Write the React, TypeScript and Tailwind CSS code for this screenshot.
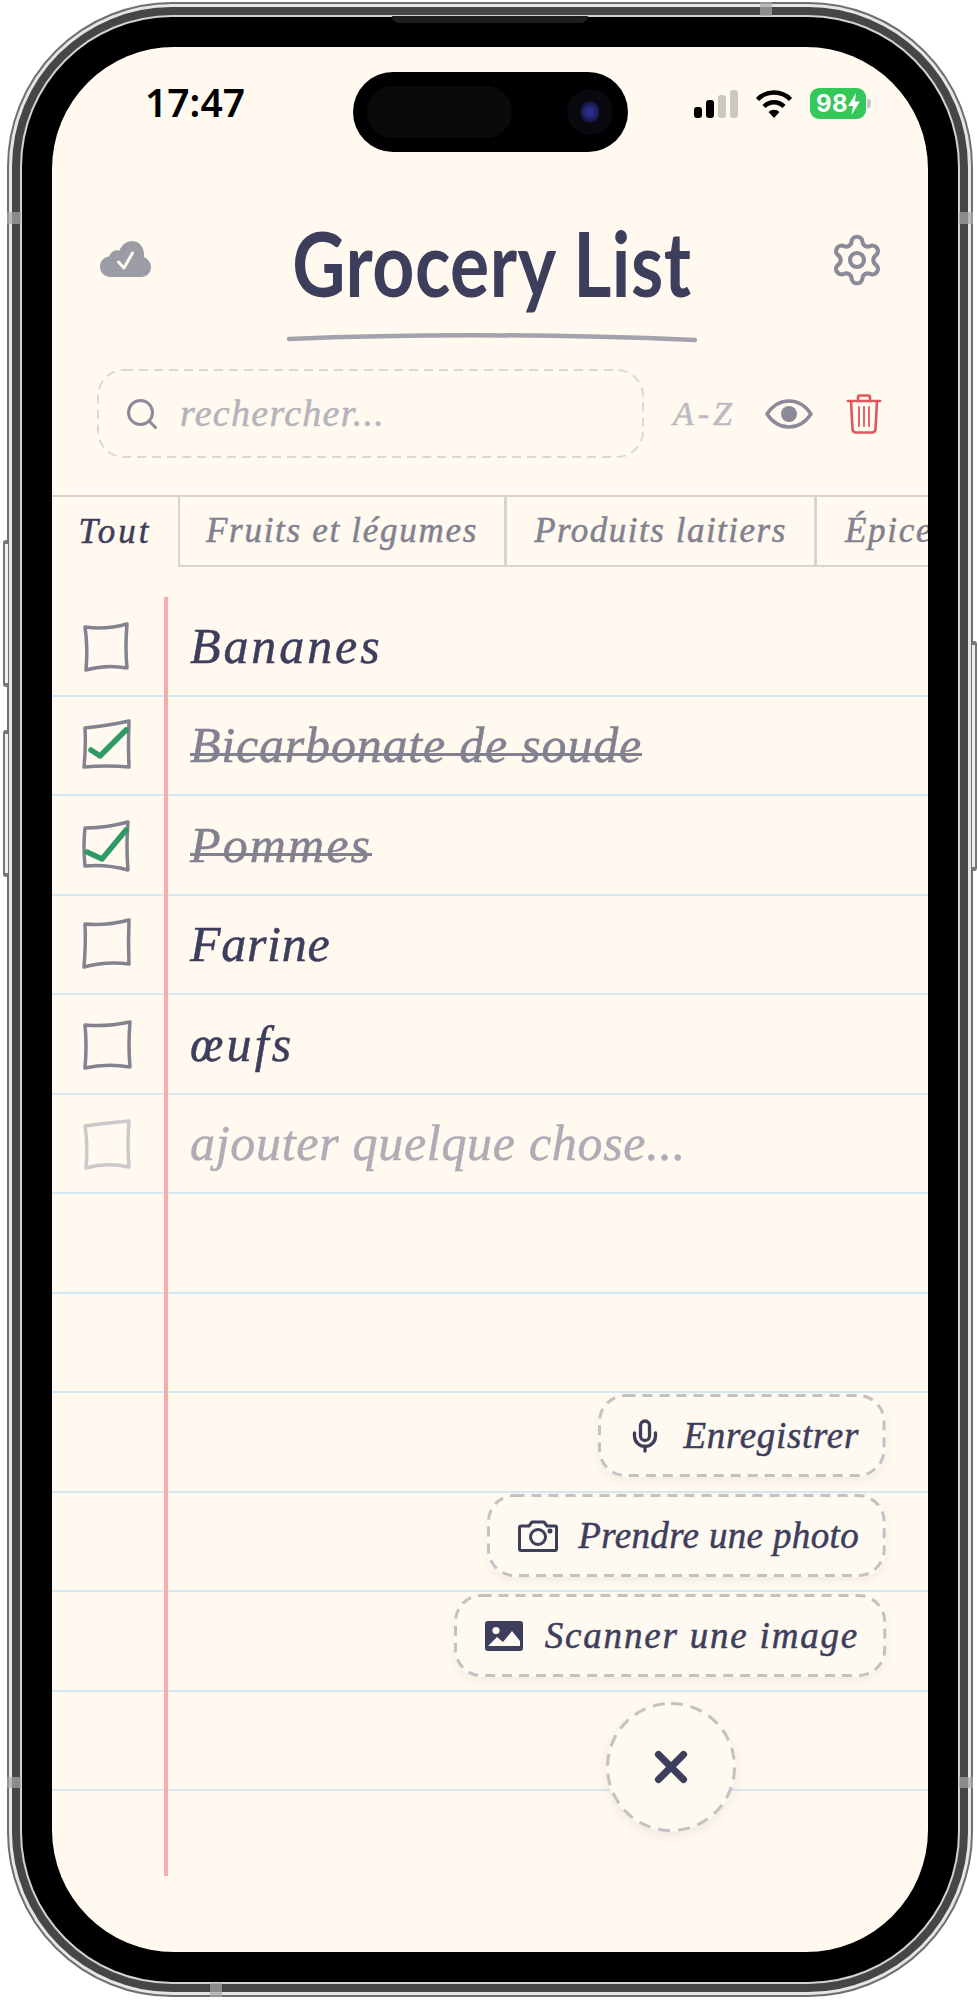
import { Mic, Search, Settings, X } from 'lucide-react';

const hand = 'font-["Liberation_Serif",serif] italic [-webkit-text-stroke:0.5px_currentColor]';

const items = [
  { label: 'Bananes', state: 'todo', track: 'tracking-[2.9px]', box: 'M3 7 Q24 10 45 4 Q43 27 45 48 Q24 44 4 50 Q6 27 3 7Z' },
  { label: 'Bicarbonate de soude', state: 'done', track: 'tracking-[0.8px]', box: 'M3 9 Q24 7 47 2 Q46 26 47 48 Q24 46 2 48 Q4 28 3 9Z', check: 'M9 31 L18 37 L44 11' },
  { label: 'Pommes', state: 'done', track: 'tracking-[2.1px]', box: 'M3 9 Q24 9 46 3 Q44 26 46 51 Q24 45 3 47 Q1 27 3 9Z', check: 'M5 33 L20 40 L44 11' },
  { label: 'Farine', state: 'todo', track: 'tracking-[0.7px]', box: 'M3 6 Q24 8 47 2 Q46 25 47 46 Q24 43 2 49 Q4 25 3 6Z' },
  { label: 'œufs', state: 'todo', track: 'tracking-[3.2px]', box: 'M3 7 Q24 9 48 4 Q46 27 48 49 Q24 45 3 50 Q5 27 3 7Z' },
  { label: 'ajouter quelque chose...', state: 'new', track: 'tracking-[0.7px]', box: 'M3 9 Q24 6 47 4 Q45 27 47 50 Q24 45 4 51 Q6 27 3 9Z' },
];

function Checkbox({ box, check, muted }: { box: string; check?: string; muted: boolean }) {
  return (
    <svg width="52" height="52" viewBox="0 0 52 52" fill="none" className="block overflow-visible">
      <path d={box} stroke={muted ? '#cbc9ca' : '#83838f'} strokeWidth="3.5" strokeLinejoin="round" />
      {check && <path d={check} stroke="#2f9a66" strokeWidth="5.5" strokeLinecap="round" strokeLinejoin="round" />}
    </svg>
  );
}

/** Bordure en tirets dessinée par-dessus : le motif du border-dashed CSS est trop court */
function DashedOutline({ radius, dash, color, width }: { radius: number; dash: string; color: string; width: number }) {
  return (
    <svg className="pointer-events-none absolute inset-0 h-full w-full overflow-visible" fill="none">
      <rect
        x={width / 2}
        y={width / 2}
        rx={radius}
        className={width === 2 ? 'h-[calc(100%-2px)] w-[calc(100%-2px)]' : 'h-[calc(100%-3px)] w-[calc(100%-3px)]'}
        stroke={color}
        strokeWidth={width}
        strokeDasharray={dash}
      />
    </svg>
  );
}

function StatusBar() {
  return (
    <div className="flex h-[105px] items-start pl-[93px] pt-[25px]">
      <span className='mt-[4px] w-[208px] font-["Noto_Sans",sans-serif] text-[39px] font-semibold leading-[52px] text-black'>
        17:47
      </span>
      <div className="flex h-[80px] w-[275px] items-center justify-between rounded-full bg-black pl-[14px] pr-[15px]">
        <div className="h-[52px] w-[145px] rounded-full bg-[#0a0a0a]" />
        <div className="flex h-[46px] w-[46px] items-center justify-center rounded-full bg-[#0b0810]">
          <div className="h-[22px] w-[18px] rounded-full bg-[radial-gradient(circle,#2a2f8a_20%,#12143f_75%)]" />
        </div>
      </div>
      <div className="ml-[66px] mt-[18px] flex h-[28px] items-end gap-[4px]">
        <div className="h-[11px] w-[8px] rounded-[3px] bg-black" />
        <div className="h-[18px] w-[8px] rounded-[3px] bg-black" />
        <div className="h-[23px] w-[8px] rounded-[3px] bg-[#cbc8bf]" />
        <div className="h-[28px] w-[8px] rounded-[3px] bg-[#cbc8bf]" />
      </div>
      <svg width="38" height="28" viewBox="0 0 38 28" fill="none" className="ml-[17px] mt-[18px]">
        <path d="M2.5 9.5A23 23 0 0 1 35.5 9.5" stroke="#000" strokeWidth="4.4" />
        <path d="M9 16.5A14 14 0 0 1 29 16.5" stroke="#000" strokeWidth="4.4" />
        <path d="M13.5 22A8 8 0 0 1 24.5 22L19 28Z" fill="#000" />
      </svg>
      <div className="ml-[17px] mt-[16px] flex items-center">
        <div className="flex h-[31px] w-[56px] items-center justify-center rounded-[9px] bg-[#34c759]">
          <span className='font-["Inter",sans-serif] text-[24px] font-bold leading-none tracking-[0.5px] text-white'>98</span>
          <svg width="12" height="22" viewBox="0 0 12 22">
            <path d="M8 0L0 13H5L3.5 22L12 8.5H7Z" fill="#fff" />
          </svg>
        </div>
        <div className="ml-[1px] h-[9px] w-[4px] rounded-r-[3px] bg-[#c9c7bf]" />
      </div>
    </div>
  );
}

function Header() {
  return (
    <div className="flex h-[195px] items-start justify-between px-[47px]">
      <svg width="51" height="36" viewBox="0 0 51 36" className="mt-[89px] ml-[1px]">
        <path
          d="M11 36C4.5 36 0 31.5 0 25.5 0 20 4 16 9 15.5 11 10.5 15 8.5 19.5 9.5 22 3.5 27 0 32 0 39 0 43.5 5.5 44 12.5 44 14 44 15 43.8 16 48 18 51 21.5 51 26 51 32 46.5 36 41 36Z"
          fill="#9c9ca6"
        />
        <path d="M18.5 21L24 27L32.5 12" stroke="#fff9f0" strokeWidth="3" fill="none" strokeLinecap="round" strokeLinejoin="round" />
      </svg>
      <div className="flex flex-col items-center pl-[4px]">
        <h1 className='mt-[57px] origin-center scale-x-[0.815] whitespace-nowrap font-["Lato",sans-serif] text-[90px] font-bold leading-[106px] tracking-[0.6px] text-[#3d3d5c]'>
          Grocery List
        </h1>
        <svg width="412" height="12" viewBox="0 0 412 12" fill="none" className="mt-[16px]">
          <path d="M3 8Q190 0 409 9" stroke="#a3a2ad" strokeWidth="4.5" strokeLinecap="round" />
        </svg>
      </div>
      <Settings size={56} strokeWidth={1.75} className="mt-[80px] -mr-[4px] text-[#8a8a99]" />
    </div>
  );
}

function SearchRow() {
  return (
    <div className="mt-[22px] flex h-[89px] items-center pl-[45px]">
      <div className="relative flex h-[89px] w-[547px] items-center gap-[20px] pl-[27px]">
        <DashedOutline radius={26} dash="9 6" color="#dbd8d2" width={2} />
        <Search size={36} strokeWidth={2} className="text-[#8a8a99]" />
        <span className={`${hand} text-[38px] tracking-[1.3px] text-[#b5b3ba]`}>rechercher...</span>
      </div>
      <span className={`${hand} ml-[29px] w-[60px] whitespace-nowrap text-[34px] tracking-[4px] text-[#bcbac0]`}>A-Z</span>
      <svg width="48" height="30" viewBox="0 0 48 30" fill="none" className="ml-[32px]">
        <path d="M2 15C8 6 15 2 24 2S40 6 46 15C40 24 33 28 24 28S8 24 2 15Z" stroke="#8a8a99" strokeWidth="3.5" strokeLinejoin="round" />
        <circle cx="24" cy="15" r="8" fill="#8a8a99" />
      </svg>
      <svg width="36" height="40" viewBox="0 0 36 40" fill="none" stroke="#e0565c" strokeWidth="2.6" strokeLinecap="round" strokeLinejoin="round" className="ml-[33px]">
        <path d="M2 7H34" />
        <path d="M12 7V3.5C12 2 13 1.5 14 1.5H22C23 1.5 24 2 24 3.5V7" />
        <path d="M5 7L6.5 35C6.6 37.5 8 38.5 10 38.5H26C28 38.5 29.4 37.5 29.5 35L31 7" />
        <path d="M13 13V32M18 13V32M23 13V32" strokeWidth="1.8" />
      </svg>
    </div>
  );
}

function Tabs() {
  return (
    <div className="mt-[37px] flex h-[72px] overflow-hidden border-t-2 border-[#d8d5d0]">
      <div className={`${hand} flex w-[128px] shrink-0 items-center justify-center border-r-2 border-[#d8d5d0] text-[35px] tracking-[3px] text-[#3d3d5c]`}>
        Tout
      </div>
      <div className={`${hand} flex w-[327px] shrink-0 items-center justify-center border-r-[3px] border-b-2 border-[#d8d5d0] text-[35px] tracking-[1.7px] text-[#82818f]`}>
        Fruits et légumes
      </div>
      <div className={`${hand} flex w-[310px] shrink-0 items-center justify-center border-r-[3px] border-b-2 border-[#d8d5d0] text-[35px] tracking-[1.5px] text-[#82818f]`}>
        Produits laitiers
      </div>
      <div className={`${hand} flex flex-1 items-center whitespace-nowrap border-b-2 border-[#d8d5d0] pl-[28px] text-[35px] tracking-[1.7px] text-[#82818f]`}>
        Épicerie
      </div>
    </div>
  );
}

function GroceryList() {
  return (
    <div className="relative mt-[30px] h-[1279px]">
      <div className="absolute left-[112px] top-0 bottom-0 z-10 w-[4px] bg-[#f4aeab]" />
      {items.map((item) => {
        const done = item.state === 'done';
        return (
          <div key={item.label} className="flex h-[99.5px] items-center border-b-2 border-[#d4e8f3]">
            <div className="ml-[30px] w-[108px] shrink-0">
              <Checkbox box={item.box} check={item.check} muted={item.state === 'new'} />
            </div>
            <span
              className={`${hand} text-[50px] leading-none ${item.track} ${
                done
                  ? 'text-[#82818f] underline decoration-[3px] underline-offset-[-9px] [text-decoration-skip-ink:none]'
                  : item.state === 'new'
                    ? 'text-[#aeacb4]'
                    : 'text-[#3d3d5c]'
              }`}
            >
              {item.label}
            </span>
          </div>
        );
      })}
      {Array.from({ length: 6 }, (_, i) => (
        <div key={i} className="h-[99.5px] border-b-2 border-[#d4e8f3]" />
      ))}
    </div>
  );
}

function ActionButton({ label, track, pad, icon }: { label: string; track: string; pad: string; icon: React.ReactNode }) {
  return (
    <div className={`relative flex h-[83px] items-center rounded-[26px] bg-[#fef9f1] pr-[27px] shadow-[0_4px_10px_rgba(0,0,0,0.05)] ${pad}`}>
      <DashedOutline radius={26} dash="10 7" color="#c4c1c3" width={3} />
      {icon}
      <span className={`${hand} text-[37px] leading-none ${track} text-[#3d3d5c]`}>{label}</span>
    </div>
  );
}

function Actions() {
  return (
    <div className="absolute right-[42px] top-[1347px] z-20 flex flex-col items-end gap-[17px]">
      <ActionButton
        label="Enregistrer"
        track="tracking-[0.7px]"
        pad="gap-[20px] pl-[29px]"
        icon={<Mic size={36} strokeWidth={2.2} className="text-[#3d3d5c]" />}
      />
      <ActionButton
        label="Prendre une photo"
        track="tracking-[0.35px]"
        pad="gap-[20px] pl-[31px]"
        icon={
          <svg width="40" height="32" viewBox="0 0 40 32" fill="none" stroke="#3d3d5c" strokeWidth="3">
            <path d="M3 6H11L14 2H26L29 6H37C38 6 38.5 6.5 38.5 7.5V29C38.5 30 38 30.5 37 30.5H3C2 30.5 1.5 30 1.5 29V7.5C1.5 6.5 2 6 3 6Z" strokeLinejoin="round" />
            <circle cx="20" cy="17" r="7.5" />
            <circle cx="32" cy="11" r="1" fill="#3d3d5c" />
          </svg>
        }
      />
      <ActionButton
        label="Scanner une image"
        track="tracking-[1.8px]"
        pad="gap-[22px] pl-[31px]"
        icon={
          <svg width="38" height="30" viewBox="0 0 38 30">
            <path d="M3 0H35C37 0 38 1 38 3V27C38 29 37 30 35 30H3C1 30 0 29 0 27V3C0 1 1 0 3 0Z" fill="#3d3d5c" />
            <circle cx="11" cy="9.5" r="3.6" fill="#fef9f1" />
            <path d="M3 25L12 16L18 21L27 10L35 20V25Z" fill="#fef9f1" />
          </svg>
        }
      />
      <div className="relative mr-[150px] mt-[8px] flex h-[130px] w-[130px] items-center justify-center rounded-full bg-[#fef9f1] shadow-[0_4px_12px_rgba(0,0,0,0.07)]">
        <DashedOutline radius={64} dash="12 8" color="#c4c1c3" width={3} />
        <X size={50} strokeWidth={3.4} className="text-[#3d3d5c]" />
      </div>
    </div>
  );
}

function DeviceDetails() {
  return (
    <>
      <div className="absolute left-[3px] top-[540px] h-[147px] w-[5px] rounded-l-[3px] border-y-4 border-l-2 border-[#777] bg-[#eee]" />
      <div className="absolute left-[3px] top-[730px] h-[147px] w-[5px] rounded-l-[3px] border-y-4 border-l-2 border-[#777] bg-[#eee]" />
      <div className="absolute right-[1px] top-[641px] h-[230px] w-[5px] rounded-r-[3px] border-y-4 border-r-2 border-[#777] bg-[#eee]" />
      <div className="absolute left-[7px] top-[212px] h-[12px] w-[14px] bg-[#a8a8a8]/70" />
      <div className="absolute left-[7px] top-[1777px] h-[11px] w-[14px] bg-[#a8a8a8]/70" />
      <div className="absolute right-[5px] top-[212px] h-[12px] w-[14px] bg-[#a8a8a8]/70" />
      <div className="absolute right-[5px] top-[1777px] h-[11px] w-[14px] bg-[#a8a8a8]/70" />
      <div className="absolute left-[760px] top-[2px] h-[14px] w-[12px] bg-[#a8a8a8]/70" />
      <div className="absolute left-[210px] bottom-[3px] h-[14px] w-[12px] bg-[#a8a8a8]/70" />
      <div className="absolute left-[392px] top-[16px] h-[7px] w-[196px] rounded-b-[8px] bg-[#1e1e1e]" />
    </>
  );
}

export default function App() {
  return (
    <div className="relative h-[2000px] w-[978px] bg-white pl-[7px] pt-[2px]">
      <div className="h-[1995px] w-[966px] rounded-[165px] border-2 border-[#6f6f6f] bg-[#e6e6e6] p-[3px]">
        <div className="h-full rounded-[160px] bg-[#464646] p-[8px]">
          <div className="h-full rounded-[152px] bg-[#d2d2d2] p-[2px]">
            <div className="h-full rounded-[150px] bg-black p-[30px]">
              <div className="relative h-full overflow-hidden rounded-[122px] bg-[#fff9f0]">
                <StatusBar />
                <Header />
                <SearchRow />
                <Tabs />
                <GroceryList />
                <Actions />
              </div>
            </div>
          </div>
        </div>
      </div>
      <DeviceDetails />
    </div>
  );
}
